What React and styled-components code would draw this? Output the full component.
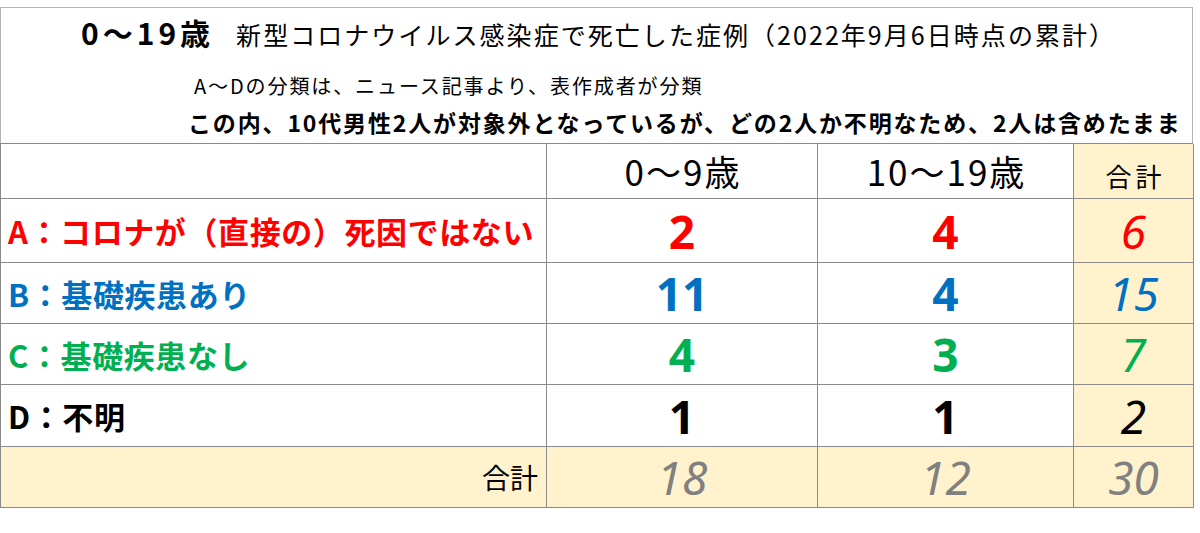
import React from 'react'
import styled, { createGlobalStyle } from 'styled-components'

const GlobalStyle = createGlobalStyle`
  html, body {
    margin: 0;
    padding: 0;
    background: #fff;
  }
  body {
    font-family: "Noto Sans CJK JP", "Noto Sans", sans-serif;
    color: #000;
  }
`

const Page = styled.div`
  padding-top: 7px;
  width: 1193px;
`

const HeaderBox = styled.div`
  box-sizing: border-box;
  height: 136px;
  border: 1px solid #b4b4b4;
  border-bottom: none;
  display: flex;
  flex-direction: column;
`

const TitleRow = styled.div`
  display: flex;
  align-items: baseline;
  padding: 8px 0 0 80px;
  line-height: 32px;
  white-space: nowrap;
`

const Age = styled.span`
  font-size: 30px;
  font-weight: 700;
  letter-spacing: 4px;
`

const Title = styled.span`
  margin-left: 22px;
  font-size: 25px;
  font-weight: 400;
  letter-spacing: 2.05px;
`

const Note = styled.div`
  padding-left: ${p => p.indent}px;
  margin-top: ${p => p.gap}px;
  font-size: ${p => p.size}px;
  font-weight: ${p => (p.bold ? 700 : 400)};
  letter-spacing: ${p => p.spacing}px;
  line-height: 26px;
  white-space: nowrap;
`

const Table = styled.div`
  display: grid;
  grid-template-columns: 546px 271px 256px 120px;
  grid-template-rows: 55px 64px 61px 61px 62px 61px;
  border-top: 1px solid #8a8a8a;
  border-left: 1px solid #8a8a8a;
`

const Cell = styled.div`
  box-sizing: border-box;
  border-right: 1px solid #8a8a8a;
  border-bottom: 1px solid #8a8a8a;
  background: ${p => (p.sum ? '#fff2cc' : '#fff')};
  display: flex;
  align-items: center;
  justify-content: ${p => p.align || 'center'};
  white-space: nowrap;
`

const ColHead = styled.span`
  font-size: ${p => (p.small ? 26 : 35)}px;
  font-weight: 400;
  line-height: 1.2;
  letter-spacing: ${p => (p.small ? 4 : 2)}px;
  margin-right: ${p => (p.small ? -4 : -2)}px;
  margin-top: ${p => (p.small ? 10 : 0)}px;
`

const Label = styled.span`
  padding-left: 7px;
  font-size: 31px;
  font-weight: 700;
  color: ${p => p.color};
  letter-spacing: 0.6px;
`

const SumLabel = styled.span`
  padding-right: 8px;
  font-size: 28px;
  font-weight: 400;
`

const Count = styled.span`
  font-family: "Noto Sans", "Noto Sans CJK JP", sans-serif;
  font-size: 46px;
  font-weight: 700;
  line-height: 1;
  color: ${p => p.color};
`

const Total = styled.span`
  font-family: "Noto Sans", "Noto Sans CJK JP", sans-serif;
  font-size: 46px;
  font-weight: 400;
  font-style: italic;
  line-height: 1;
  color: ${p => p.color};
`

const rows = [
  { label: 'A：コロナが（直接の）死因ではない', color: '#ff0000', a: 2, b: 4 },
  { label: 'B：基礎疾患あり', color: '#0070c0', a: 11, b: 4 },
  { label: 'C：基礎疾患なし', color: '#00b050', a: 4, b: 3 },
  { label: 'D：不明', color: '#000000', a: 1, b: 1 },
]

export default function App() {
  const sumA = rows.reduce((s, r) => s + r.a, 0)
  const sumB = rows.reduce((s, r) => s + r.b, 0)

  return (
    <Page>
      <GlobalStyle />
      <HeaderBox>
        <TitleRow>
          <Age>0～19歳</Age>
          <Title>新型コロナウイルス感染症で死亡した症例（2022年9月6日時点の累計）</Title>
        </TitleRow>
        <Note indent={193} gap={23} size={20} spacing={1.9}>
          A～Dの分類は、ニュース記事より、表作成者が分類
        </Note>
        <Note indent={187} gap={10} size={23} spacing={1.85} bold>
          この内、10代男性2人が対象外となっているが、どの2人か不明なため、2人は含めたまま
        </Note>
      </HeaderBox>

      <Table>
        <Cell />
        <Cell><ColHead>0～9歳</ColHead></Cell>
        <Cell><ColHead>10～19歳</ColHead></Cell>
        <Cell sum><ColHead small>合計</ColHead></Cell>

        {rows.map(r => (
          <React.Fragment key={r.label}>
            <Cell align="flex-start"><Label color={r.color}>{r.label}</Label></Cell>
            <Cell><Count color={r.color}>{r.a}</Count></Cell>
            <Cell><Count color={r.color}>{r.b}</Count></Cell>
            <Cell sum><Total color={r.color}>{r.a + r.b}</Total></Cell>
          </React.Fragment>
        ))}

        <Cell sum align="flex-end"><SumLabel>合計</SumLabel></Cell>
        <Cell sum><Total color="#808080">{sumA}</Total></Cell>
        <Cell sum><Total color="#808080">{sumB}</Total></Cell>
        <Cell sum><Total color="#808080">{sumA + sumB}</Total></Cell>
      </Table>
    </Page>
  )
}
